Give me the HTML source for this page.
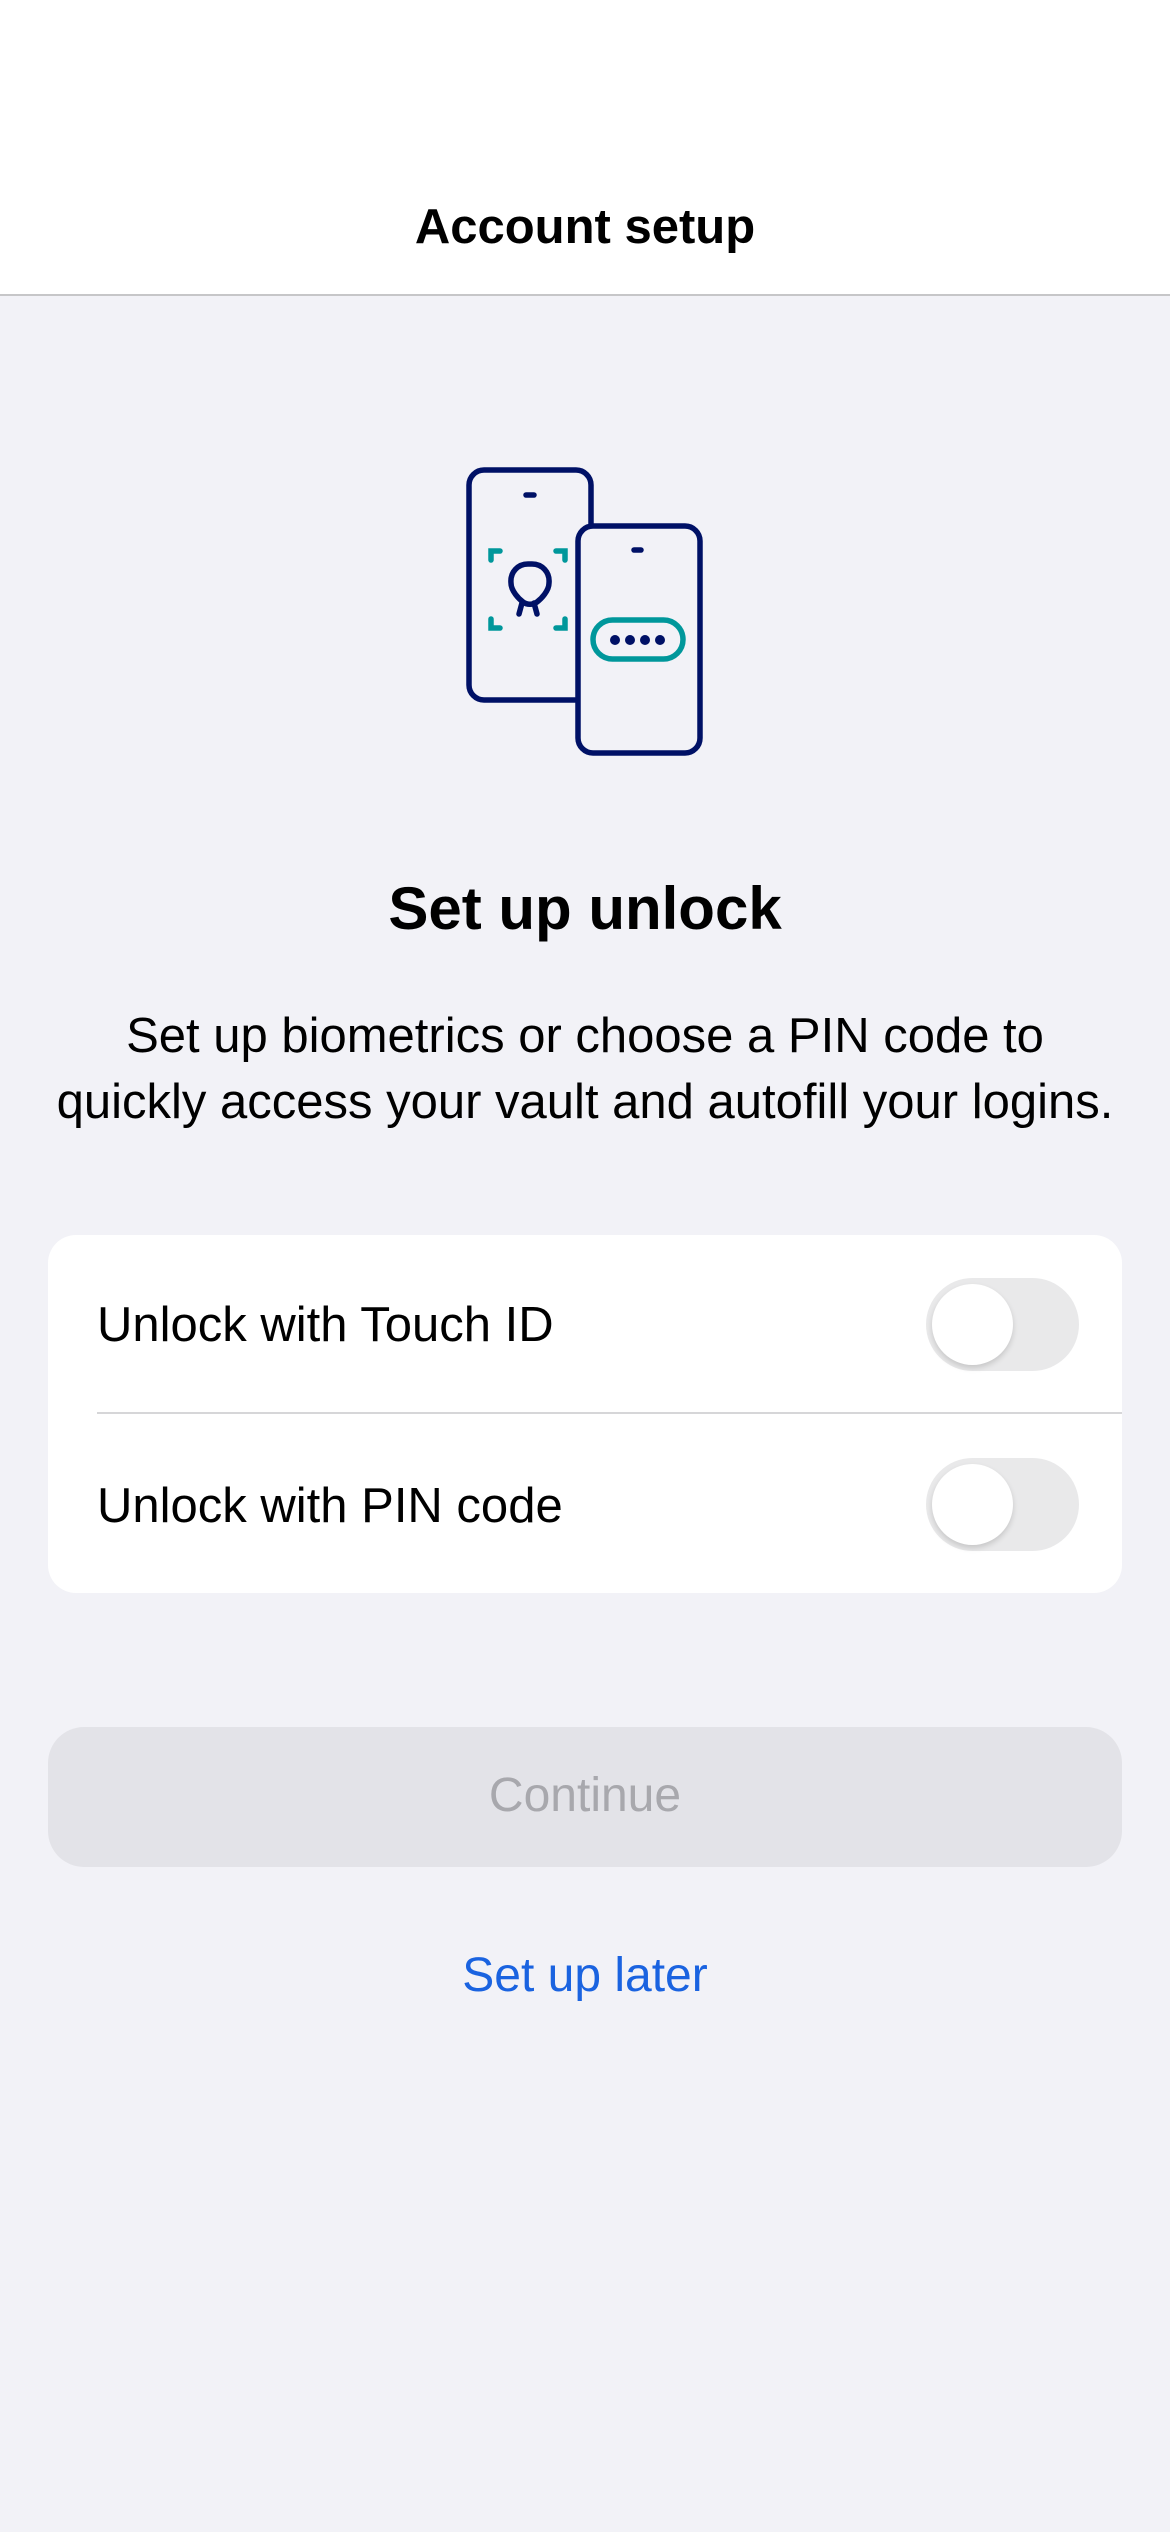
<!DOCTYPE html>
<html><head><meta charset="utf-8"><style>
body{margin:0;width:1170px;height:2532px;background:#f2f2f7;font-family:"Liberation Sans",sans-serif;position:relative;overflow:hidden}
.hdr{position:absolute;left:0;top:0;width:1170px;height:294px;background:#fff;border-bottom:2px solid #c6c6c8}
.t{position:absolute;left:0;width:1170px;text-align:center;color:#000}
.card{position:absolute;left:48px;top:1235px;width:1074px;height:358px;background:#fff;border-radius:28px}
.row{position:absolute;left:49px;font-size:49px;color:#000}
.tg{position:absolute;left:878px;width:153px;height:93px;border-radius:47px;background:#e9e9ea}
.tg::after{content:"";position:absolute;left:6px;top:6px;width:81px;height:81px;border-radius:50%;background:#fff;box-shadow:0 3px 6px rgba(0,0,0,.15)}
</style></head><body>
<div class="hdr"><div class="t" style="top:199px;font-size:49px;font-weight:bold">Account setup</div></div>
<svg style="position:absolute;left:0;top:0" width="1170" height="800">
<g fill="none" stroke="#001166" stroke-width="5.5" stroke-linecap="round">
<path d="M575 700 H484 a15 15 0 0 1 -15 -15 V485 a15 15 0 0 1 15 -15 H576 a15 15 0 0 1 15 15 V525"/>
<rect x="578" y="526" width="122" height="227" rx="15"/>
<path d="M526 495h8M634 550h7"/>
<path d="M528 564c-10 0 -18 8 -17 19c0 8 8 16 12 19c4 3 10 3 14 0c4 -3 12 -11 12 -19c1 -11 -7 -19 -17 -19z"/>
<path d="M522 603l-3 11M534 603l3 11"/>
</g>
<g fill="none" stroke="#00979b" stroke-width="5.5" stroke-linecap="round">
<path d="M491 560v-9h9M556 551h9v9M491 619v9h9M556 628h9v-9"/>
<rect x="593" y="620" width="90" height="39" rx="19.5"/>
</g>
<g fill="#001166"><circle cx="615" cy="640" r="5"/><circle cx="630" cy="640" r="5"/><circle cx="645" cy="640" r="5"/><circle cx="660" cy="640" r="5"/></g>
</svg>
<div class="t" style="top:874px;font-size:60px;font-weight:bold">Set up unlock</div>
<div class="t" style="top:1003px;font-size:49px;line-height:66px">Set up biometrics or choose a PIN code to<br>quickly access your vault and autofill your logins.</div>
<div class="card">
<div class="row" style="top:62px">Unlock with Touch ID</div>
<div class="tg" style="top:43px"></div>
<div style="position:absolute;left:49px;right:0;top:177px;height:2px;background:#d6d6d8"></div>
<div class="row" style="top:243px">Unlock with PIN code</div>
<div class="tg" style="top:223px"></div>
</div>
<div style="position:absolute;left:48px;top:1727px;width:1074px;height:140px;border-radius:36px;background:#e3e3e8"></div>
<div class="t" style="top:1768px;font-size:48px;color:#a8a8ad">Continue</div>
<div class="t" style="top:1948px;font-size:48px;color:#1a63e0">Set up later</div>
</body></html>
